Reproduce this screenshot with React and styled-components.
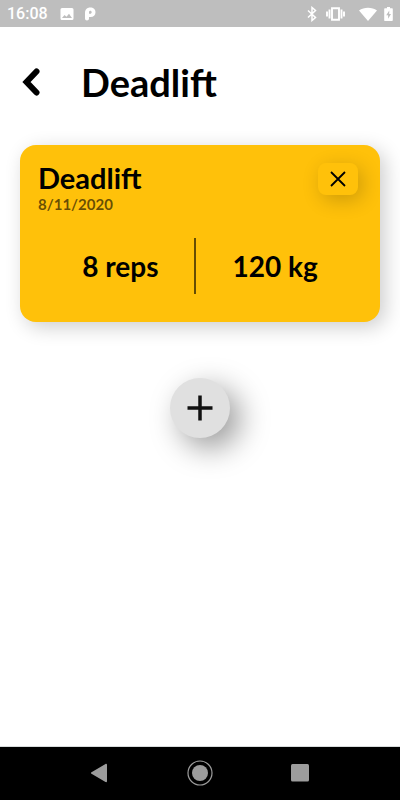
import React from 'react';
import styled, { createGlobalStyle } from 'styled-components';

const GlobalStyle = createGlobalStyle`
  * {
    box-sizing: border-box;
  }

  body {
    margin: 0;
    background: #fff;
    color: #000;
    font-family: Lato, 'Noto Sans', sans-serif;
  }
`;

const IconButton = styled.button`
  display: flex;
  align-items: center;
  justify-content: center;
  padding: 0;
  border: none;
  background: none;
  color: inherit;
  cursor: pointer;
`;

const Screen = styled.div`
  display: flex;
  flex-direction: column;
  min-height: 100vh;
`;

const StatusBar = styled.div`
  display: flex;
  align-items: center;
  justify-content: space-between;
  height: 27px;
  padding: 0 7px;
  background: #bebebe;
  color: #fff;
`;

const StatusGroup = styled.div`
  display: flex;
  align-items: center;
  gap: ${({ $gap }) => $gap}px;
`;

const Clock = styled.time`
  margin-right: 2px;
  font-family: Roboto, sans-serif;
  font-size: 16px;
  font-weight: 500;
  line-height: 27px;
`;

const Header = styled.header`
  display: flex;
  align-items: center;
  gap: 34px;
  padding: 31px 16px 0 15px;
`;

const BackButton = styled(IconButton)`
  width: 32px;
  height: 48px;
`;

const Title = styled.h1`
  margin: 0;
  font-size: 38px;
  font-weight: 700;
  line-height: 48px;
`;

const Content = styled.main`
  display: flex;
  flex: 1;
  flex-direction: column;
  align-items: center;
  gap: 56px;
  padding: 39px 20px;
`;

const Card = styled.article`
  width: 100%;
  padding: 18px 18px 28px;
  border-radius: 16px;
  background: #ffc10a;
  box-shadow: 5px 5px 20px rgba(0, 0, 0, 0.2);
`;

const CardHeader = styled.div`
  display: flex;
  align-items: flex-start;
  justify-content: space-between;
  padding-right: 4px;
`;

const Exercise = styled.h2`
  margin: 0;
  font-size: 29px;
  font-weight: 700;
  line-height: 30px;
`;

const LoggedOn = styled.p`
  margin: 0;
  color: rgba(0, 0, 0, 0.6);
  font-size: 15px;
  font-weight: 700;
  line-height: 22px;
`;

const RemoveButton = styled(IconButton)`
  width: 40px;
  height: 32px;
  border-radius: 8px;
  background: #ffc10a;
  box-shadow: 4px 5px 20px rgba(0, 0, 0, 0.2);
`;

const Stats = styled.div`
  display: flex;
  justify-content: center;
  gap: 36px;
  margin-top: 23px;
`;

const Stat = styled.p`
  margin: 0;
  font-size: 28px;
  font-weight: 700;
  line-height: 56px;
`;

const Divider = styled.span`
  width: 2px;
  background: rgba(0, 0, 0, 0.6);
`;

const AddButton = styled(IconButton)`
  width: 60px;
  height: 60px;
  border-radius: 50%;
  background: #e0e0e0;
  box-shadow: 10px 10px 30px rgba(0, 0, 0, 0.4);
`;

const NavBar = styled.nav`
  display: flex;
  align-items: center;
  justify-content: center;
  gap: 60px;
  height: 54px;
  padding-bottom: 1px;
  border-top: 1px solid #d8dcdc;
  background: #000;
  color: #9c9c9c;
`;

const NavButton = styled(IconButton)`
  width: 40px;
  height: 40px;
`;

const App = () => (
  <>
    <GlobalStyle />
    <Screen>
      <StatusBar>
        <StatusGroup $gap={10}>
          <Clock>16:08</Clock>
          <svg width="14" height="14" viewBox="0 0 14 14" fill="currentColor" aria-hidden="true">
            <path fillRule="evenodd" d="M2 1h10a1.500 1.500 0 0 1 1.500 1.500v9A1.500 1.500 0 0 1 12 13H2A1.500 1.500 0 0 1 .5 11.500v-9A1.500 1.500 0 0 1 2 1zm0 10h10L9 6.800l-2.500 3L4.500 8z" />
          </svg>
          <svg width="12" height="14" viewBox="0 0 12 14" fill="currentColor" aria-hidden="true">
            <path fillRule="evenodd" d="M1 6C1 2.600 3 .5 6.200.5S11.500 2.300 11.500 5.300 9.500 10 6.500 10H5v1.500c0 1.300-.8 2-2 2s-2-.7-2-2zM5 6.800h1.200c.9 0 1.500-.6 1.500-1.500S7.100 3.800 6.200 3.800 5 4.500 5 5.500z" />
          </svg>
        </StatusGroup>
        <StatusGroup $gap={14}>
          <StatusGroup $gap={9}>
            <svg width="10" height="16" viewBox="0 0 10 16" fill="none" stroke="currentColor" strokeWidth="1.500" aria-hidden="true">
              <path d="M1 4.500l7.500 7L5 14.500v-13l3.500 3L1 11.500" />
            </svg>
            <svg width="19" height="14" viewBox="0 0 19 14" fill="none" stroke="currentColor" strokeWidth="1.900" aria-hidden="true">
              <path d="M6 1.200h7v11.600H6zM3.500 2.500v9M15.500 2.500v9M1 4.500v5M18 4.500v5" />
            </svg>
          </StatusGroup>
          <StatusGroup $gap={7}>
            <svg width="18" height="14" viewBox="0 0 18 14" fill="currentColor" aria-hidden="true">
              <path d="M0 3.500C5-.3 13-.3 18 3.500L9 14z" />
            </svg>
            <svg width="9" height="14" viewBox="0 0 9 14" fill="currentColor" aria-hidden="true">
              <path fillRule="evenodd" d="M3 0h3v1.300h2c.6 0 .8.300.8.800V13c0 .6-.3 1-.8 1H1c-.6 0-.8-.4-.8-1V2.100c0-.5.2-.8.8-.8h2zM5.300 3.500L2.200 8.300h1.900v3.500L7 7H5.200z" />
            </svg>
          </StatusGroup>
        </StatusGroup>
      </StatusBar>

      <Header>
        <BackButton type="button" aria-label="Back">
          <svg width="20" height="28" viewBox="0 0 20 28" fill="none" stroke="currentColor" strokeWidth="6" aria-hidden="true">
            <path d="M15.500 3.500L5.500 14l10 10.500" strokeLinecap="round" />
          </svg>
        </BackButton>
        <Title>Deadlift</Title>
      </Header>

      <Content>
        <Card>
          <CardHeader>
            <div>
              <Exercise>Deadlift</Exercise>
              <LoggedOn>8/11/2020</LoggedOn>
            </div>
            <RemoveButton type="button" aria-label="Remove record">
              <svg width="16" height="16" viewBox="0 0 16 16" fill="none" stroke="currentColor" strokeWidth="1.800" aria-hidden="true">
                <path d="M1 1l14 14M15 1L1 15" />
              </svg>
            </RemoveButton>
          </CardHeader>
          <Stats>
            <Stat>8 reps</Stat>
            <Divider />
            <Stat>120 kg</Stat>
          </Stats>
        </Card>
        <AddButton type="button" aria-label="Add record">
          <svg width="26" height="26" viewBox="0 0 26 26" fill="none" stroke="#111" strokeWidth="3.500" aria-hidden="true">
            <path d="M13 .5v25M.5 13h25" />
          </svg>
        </AddButton>
      </Content>

      <NavBar aria-label="System">
        <NavButton type="button" aria-label="Back">
          <svg width="20" height="20" viewBox="0 0 20 20" fill="currentColor" aria-hidden="true">
            <path d="M1.500 9.200L15.500 1c.8-.4 1.500 0 1.500.8v16.400c0 .8-.7 1.200-1.500.8L1.500 10.800c-.7-.4-.7-1.200 0-1.600z" />
          </svg>
        </NavButton>
        <NavButton type="button" aria-label="Home">
          <svg width="26" height="26" viewBox="0 0 26 26" aria-hidden="true">
            <circle cx="13" cy="13" r="8" fill="currentColor" />
            <circle cx="13" cy="13" r="12" fill="none" stroke="currentColor" strokeWidth="1.200" />
          </svg>
        </NavButton>
        <NavButton type="button" aria-label="Recent apps">
          <svg width="18" height="18" viewBox="0 0 18 18" fill="currentColor" aria-hidden="true">
            <rect width="18" height="17.500" rx="1.500" />
          </svg>
        </NavButton>
      </NavBar>
    </Screen>
  </>
);

export default App;
